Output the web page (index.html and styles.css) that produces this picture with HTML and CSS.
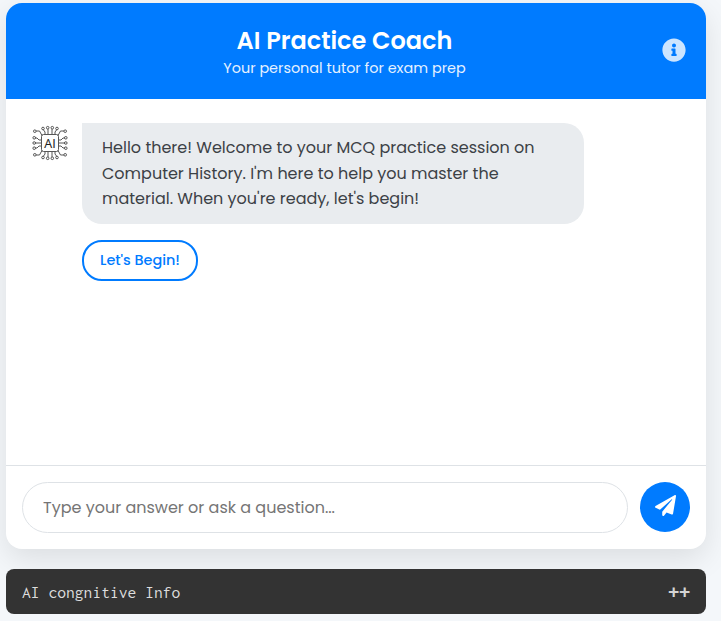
FILE: index.html
```html
<!DOCTYPE html>
<html lang="en">
<head>
<meta charset="utf-8">
<title>AI Practice Coach</title>
<link rel="stylesheet" href="styles.css">
</head>
<body>
<main class="chat">
  <header class="header">
    <div class="heading">
      <h1>AI Practice Coach</h1>
      <p>Your personal tutor for exam prep</p>
    </div>
    <button class="info" aria-label="Info">
      <svg viewBox="0 0 512 512"><path d="M256 8C119.043 8 8 119.083 8 256c0 136.997 111.043 248 248 248s248-111.003 248-248C504 119.083 392.957 8 256 8zm0 110c23.196 0 42 18.804 42 42s-18.804 42-42 42-42-18.804-42-42 18.804-42 42-42zm56 254c0 6.627-5.373 12-12 12h-88c-6.627 0-12-5.373-12-12v-24c0-6.627 5.373-12 12-12h12v-64h-12c-6.627 0-12-5.373-12-12v-24c0-6.627 5.373-12 12-12h64c6.627 0 12 5.373 12 12v100h12c6.627 0 12 5.373 12 12v24z"/></svg>
    </button>
  </header>
  <section class="messages">
    <svg class="avatar" viewBox="0 0 40 40">
      <g class="trace">
        <rect x="11.5" y="11.5" width="17" height="17" rx="2"/>
        <path d="M18 11V6M22 11V6M15 11V9L13.500 7M25 11V9L26.500 7M12 12.500L9.500 8H6M28 12.500L30.500 8H34"/>
        <path d="M18 29V34M22 29V34M15 29V31L13.500 33M25 29V31L26.500 33M12 27.500L9.500 32H6M28 27.500L30.500 32H34"/>
        <path d="M11 20H5M11 17H9L7 15H5M11 23H9L7 25H5M29 20H35M29 17H31L33 15H35M29 23H31L33 25H35"/>
        <circle cx="17.700" cy="4.700" r="1.300"/><circle cx="22.300" cy="4.700" r="1.300"/><circle cx="13" cy="5.500" r="1.300"/><circle cx="27" cy="5.500" r="1.300"/>
        <circle cx="17.700" cy="35.300" r="1.300"/><circle cx="22.300" cy="35.300" r="1.300"/><circle cx="13" cy="34.500" r="1.300"/><circle cx="27" cy="34.500" r="1.300"/>
        <circle cx="4.800" cy="8.200" r="1.300"/><circle cx="4.200" cy="14.800" r="1.300"/><circle cx="4.200" cy="20" r="1.300"/><circle cx="4.200" cy="25.200" r="1.300"/><circle cx="4.800" cy="31.800" r="1.300"/>
        <circle cx="35.200" cy="8.200" r="1.300"/><circle cx="35.800" cy="14.800" r="1.300"/><circle cx="35.800" cy="20" r="1.300"/><circle cx="35.800" cy="25.200" r="1.300"/><circle cx="35.200" cy="31.800" r="1.300"/>
      </g>
      <text x="20" y="24.500" text-anchor="middle">AI</text>
    </svg>
    <div class="content">
      <p class="bubble">Hello there! Welcome to your MCQ practice session on Computer History. I'm here to help you master the material. When you're ready, let's begin!</p>
      <button class="option">Let's Begin!</button>
    </div>
  </section>
  <footer class="composer">
    <input type="text" placeholder="Type your answer or ask a question...">
    <button class="send" aria-label="Send">
      <svg viewBox="0 0 512 512"><path d="M476 3.200L12.500 270.600c-18.100 10.400-15.800 35.600 2.200 43.200L121 358.400l287.300-253.200c5.500-4.900 13.300 2.600 8.600 8.300L176 407v80.500c0 23.600 28.500 32.900 42.500 15.800L282 426l124.600 52.200c14.200 6 30.400-2.900 33-18.200l72-432C515 7.800 493.300-6.800 476 3.200z"/></svg>
    </button>
  </footer>
</main>
<div class="terminal"><span>AI congnitive Info</span><span class="plus">++</span></div>
</body>
</html>
```
FILE: styles.css
```css
* { box-sizing: border-box; }
body {
  margin: 0;
  padding: 3px 15px 7px 6px;
  height: 621px;
  overflow: hidden;
  background: #f4f7fa;
  font-family: Poppins, Inter, sans-serif;
}
h1, p { margin: 0; }
button { padding: 0; border: 0; font-family: inherit; }
svg { display: block; }
.chat {
  display: flex;
  flex-direction: column;
  height: 546px;
  overflow: hidden;
  background: #fff;
  border-radius: 16px;
  box-shadow: 0 10px 30px rgba(0, 0, 0, 0.1);
}
.header {
  display: flex;
  align-items: center;
  height: 96px;
  padding: 0 20px 2px;
  background: #007bff;
  color: #fff;
}
.heading { flex: 1; padding: 6px 0 0 1px; text-align: center; }
.heading h1 {
  font-size: 24px;
  font-weight: 600;
  line-height: 29px;
}
.heading p {
  font-size: 14.400px;
  line-height: 26px;
  opacity: 0.9;
}
.info { width: 24px; background: none; }
.info svg { width: 24px; height: 24px; fill: #cce5ff; }
.messages {
  display: flex;
  flex: 1;
  gap: 12px;
  padding: 24px;
}
.avatar { width: 40px; height: 40px; }
.trace { fill: none; stroke: #444; stroke-width: 0.9; }
.avatar text {
  font: 12.500px "Open Sans", sans-serif;
  fill: #222;
  stroke: #222;
  stroke-width: 0.1;
}
.bubble {
  width: 502px;
  height: 101px;
  padding: 12px 20px;
  border-radius: 0 20px 20px 20px;
  background: #e9ecef;
  color: #3c4146;
  font-size: 16px;
  line-height: 25.600px;
}
.option {
  width: 116px;
  height: 41px;
  margin-top: 16px;
  border: 2px solid #007bff;
  border-radius: 20px;
  background: #fff;
  color: #007bff;
  font-size: 14.400px;
  font-weight: 500;
}
.composer {
  display: flex;
  gap: 12px;
  height: 84px;
  padding: 16px;
  border-top: 1px solid #dee2e6;
}
.composer input {
  flex: 1;
  height: 51px;
  padding: 0 20px;
  border: 1px solid #dee2e6;
  border-radius: 26px;
  font: 16px Poppins, Inter, sans-serif;
}
.composer input::placeholder { color: #757575; }
.send {
  display: grid;
  place-items: center;
  width: 50px;
  height: 50px;
  border-radius: 50%;
  background: #007bff;
}
.send svg { width: 21px; height: 21px; margin-top: -3px; fill: #fff; }
.terminal {
  display: flex;
  align-items: center;
  justify-content: space-between;
  height: 45px;
  margin-top: 20px;
  padding: 0 16px;
  border-radius: 8px;
  background: #333;
  color: #ddd;
  font: 17.600px Inconsolata, "DejaVu Sans Mono", monospace;
}
.plus {
  color: #d4d4d4;
  font: 700 18px "DejaVu Sans Mono", monospace;
}
```
